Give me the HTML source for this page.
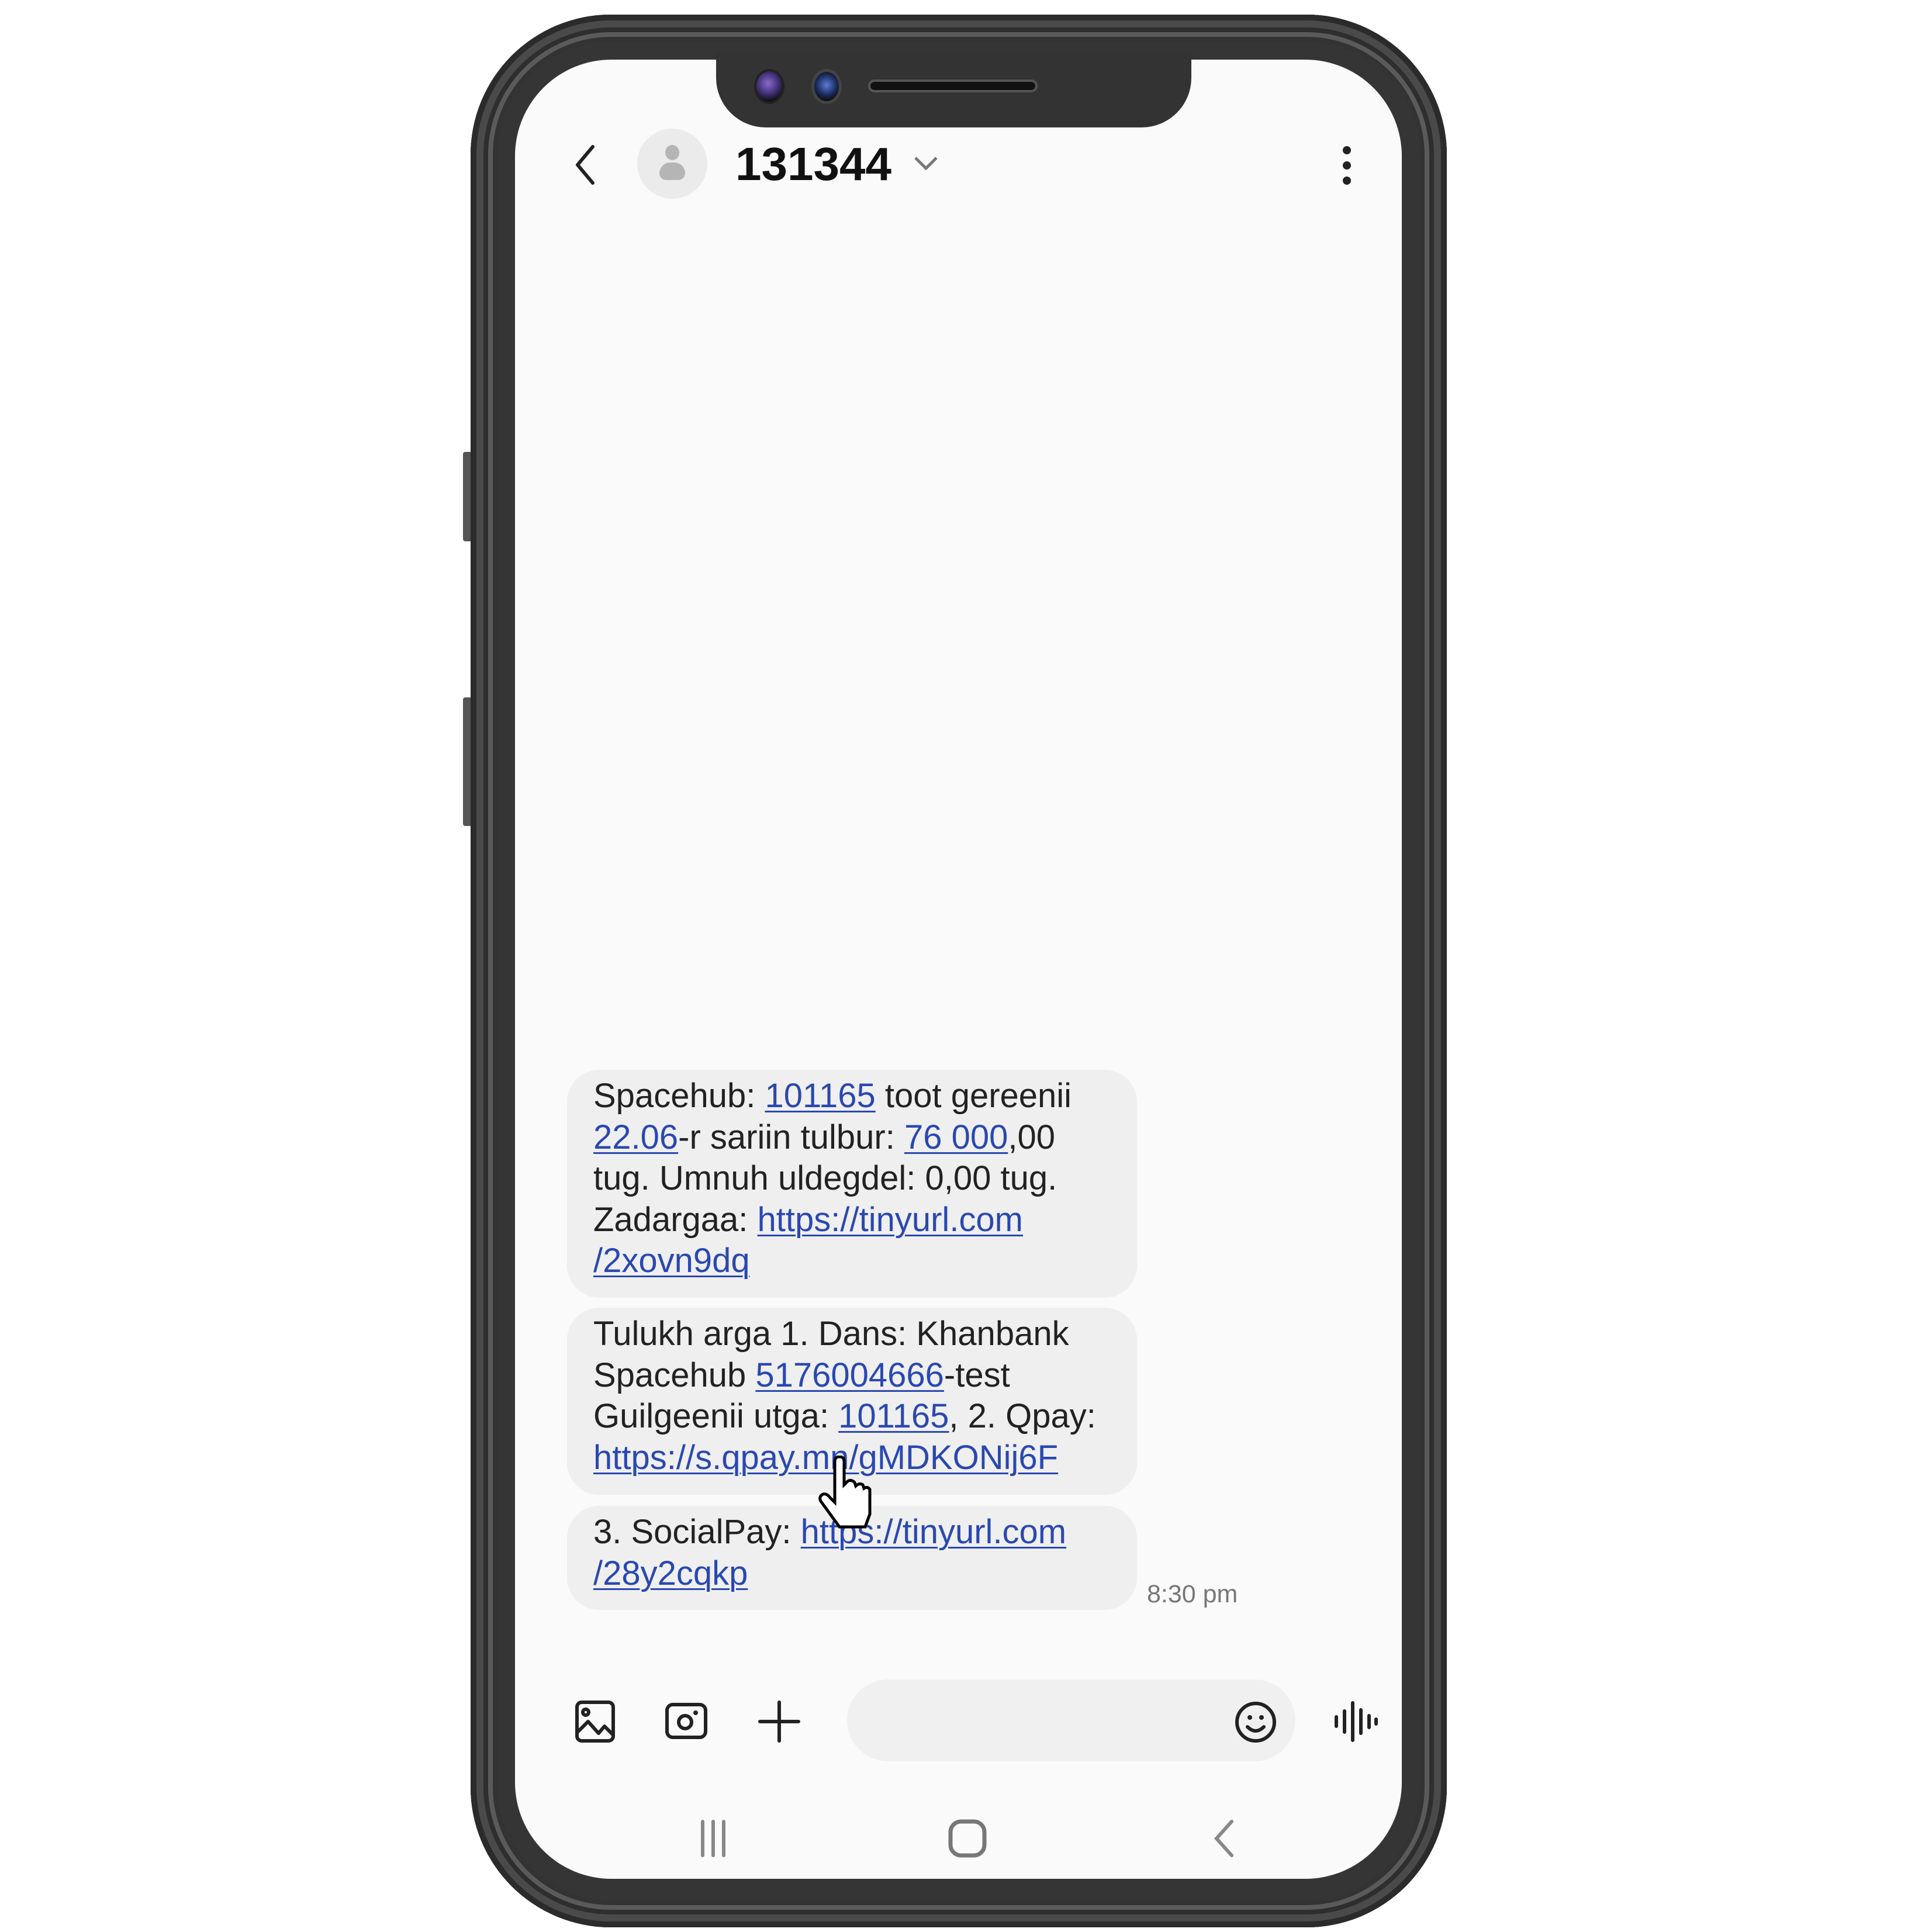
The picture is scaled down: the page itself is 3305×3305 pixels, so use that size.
<!DOCTYPE html>
<html><head><meta charset="utf-8"><style>
*{margin:0;padding:0;box-sizing:border-box}
body{width:3305px;height:3305px;background:#fff;position:relative;overflow:hidden;font-family:"Liberation Sans",Arial,sans-serif}
.abs{position:absolute}
.frame{left:805px;top:25px;width:1670px;height:3272px;border-radius:240px;background:#353535;box-shadow:inset 0 0 0 10px #2b2b2b,inset 0 0 0 22px #4a4a4a,inset 0 0 0 30px #2e2e2e,inset 0 0 0 38px #5a5a5a,inset 0 0 0 46px #333}
.screen{left:881px;top:102px;width:1517px;height:3112px;border-radius:165px;background:#fafafa;overflow:hidden}
.notch{left:1225px;top:90px;width:813px;height:128px;background:#333;border-radius:0 0 85px 85px}
.btn{left:792px;width:14px;background:#555;border-radius:4px 0 0 4px}
.bub{left:970px;width:975px;background:#efefef;border-radius:55px;padding:10px 0 0 45px;font-size:58px;line-height:70.5px;color:#222;white-space:nowrap}
.bub a{color:#2a48b0;text-decoration:underline;text-decoration-thickness:3px;text-underline-offset:6px}
.ic{stroke:#222;fill:none;stroke-width:6;stroke-linecap:round;stroke-linejoin:round}
</style></head><body>
<div class="abs btn" style="top:773px;height:153px"></div>
<div class="abs btn" style="top:1193px;height:220px"></div>
<div class="abs frame"></div>
<div class="abs screen"></div>
<div class="abs notch"></div>
<div class="abs" style="left:1290px;top:118px;width:52px;height:60px;border-radius:50%;background:radial-gradient(circle at 45% 40%,#8a6ad0,#3a2a6a 50%,#111 75%);border:4px solid #222"></div>
<div class="abs" style="left:1388px;top:118px;width:52px;height:60px;border-radius:50%;background:radial-gradient(circle at 50% 45%,#5a7ad8,#1a2a5a 50%,#111 75%);border:5px solid #444"></div>
<div class="abs" style="left:1485px;top:136px;width:290px;height:22px;border-radius:11px;background:#111;border:4px solid #555"></div>

<svg class="abs" style="left:970px;top:245px" width="60" height="75"><path class="ic" d="M44 6 L18 37 L44 68" stroke-width="6"/></svg>
<div class="abs" style="left:1090px;top:220px;width:120px;height:120px;border-radius:50%;background:#ebebeb"></div>
<div class="abs" style="left:1138px;top:248px;width:24px;height:26px;border-radius:50%;background:#b5b5b5"></div>
<div class="abs" style="left:1128px;top:278px;width:44px;height:30px;border-radius:22px 22px 14px 14px;background:#b5b5b5"></div>
<div class="abs" style="left:1258px;top:236px;font-size:80px;font-weight:bold;color:#111;line-height:90px">131344</div>
<svg class="abs" style="left:1560px;top:262px" width="50" height="35"><path d="M6 8 L24 26 L42 8" fill="none" stroke="#777" stroke-width="5"/></svg>
<div class="abs" style="left:2297px;top:250px;width:14px;height:14px;border-radius:50%;background:#222;box-shadow:0 26px 0 #222,0 52px 0 #222"></div>

<div class="abs bub" style="top:1830px;height:390px">Spacehub: <a>101165</a> toot gereenii<br><a>22.06</a>-r sariin tulbur: <a>76 000</a>,00<br>tug. Umnuh uldegdel: 0,00 tug.<br>Zadargaa: <a>https://tinyurl.com</a><br><a>/2xovn9dq</a></div>
<div class="abs bub" style="top:2237px;height:320px">Tulukh arga 1. Dans: Khanbank<br>Spacehub <a>5176004666</a>-test<br>Guilgeenii utga: <a>101165</a>, 2. Qpay:<br><a>https://s.qpay.mn/gMDKONij6F</a></div>
<div class="abs bub" style="top:2576px;height:178px">3. SocialPay: <a>https://tinyurl.com</a><br><a>/28y2cqkp</a></div>
<div class="abs" style="left:1962px;top:2703px;font-size:43px;color:#777">8:30 pm</div>

<svg class="abs" style="left:1390px;top:2490px" width="110" height="130"><path d="M38 10 Q38 2 46 2 Q54 2 54 10 L54 50 L60 44 Q66 40 72 46 L74 52 Q80 46 86 50 L88 56 Q94 52 98 58 L98 100 L90 122 L46 122 L14 78 Q10 70 18 66 Q24 64 30 72 L38 80 Z" fill="#fff" stroke="#000" stroke-width="5"/></svg>

<div class="abs" style="left:1449px;top:2873px;width:767px;height:140px;border-radius:70px;background:#f0f0f0"></div>
<svg class="abs" style="left:980px;top:2905px" width="80" height="80"><rect class="ic" x="7" y="7" width="62" height="66" rx="8"/><circle class="ic" cx="22" cy="24" r="5" stroke-width="4"/><path class="ic" d="M8 58 L26 40 L44 60 L54 48 L68 62"/></svg>
<svg class="abs" style="left:1136px;top:2910px" width="80" height="70"><rect class="ic" x="5" y="6" width="66" height="56" rx="10"/><circle class="ic" cx="36" cy="36" r="11"/><circle cx="54" cy="20" r="4" fill="#222"/></svg>
<svg class="abs" style="left:1296px;top:2908px" width="74" height="74"><path class="ic" d="M37 4 V70 M4 37 H70"/></svg>
<svg class="abs" style="left:2110px;top:2908px" width="76" height="76"><circle class="ic" cx="38" cy="38" r="32"/><circle cx="28" cy="30" r="4" fill="#222"/><circle cx="48" cy="30" r="4" fill="#222"/><path class="ic" d="M24 46 Q38 60 52 46" stroke-width="5"/></svg>
<svg class="abs" style="left:2280px;top:2905px" width="80" height="80"><path class="ic" d="M6 32 V48 M20 22 V58 M34 8 V72 M48 20 V60 M62 30 V50 M74 36 V44" stroke-width="5"/></svg>

<svg class="abs" style="left:1190px;top:3110px" width="70" height="70"><path d="M12 6 V64 M30 6 V64 M48 6 V64" stroke="#888" stroke-width="6" stroke-linecap="round"/></svg>
<svg class="abs" style="left:1620px;top:3110px" width="76" height="70"><rect x="6" y="6" width="58" height="58" rx="18" fill="none" stroke="#777" stroke-width="7"/></svg>
<svg class="abs" style="left:2065px;top:3110px" width="60" height="70"><path d="M42 6 L16 35 L42 64" fill="none" stroke="#888" stroke-width="6" stroke-linecap="round"/></svg>
</body></html>
